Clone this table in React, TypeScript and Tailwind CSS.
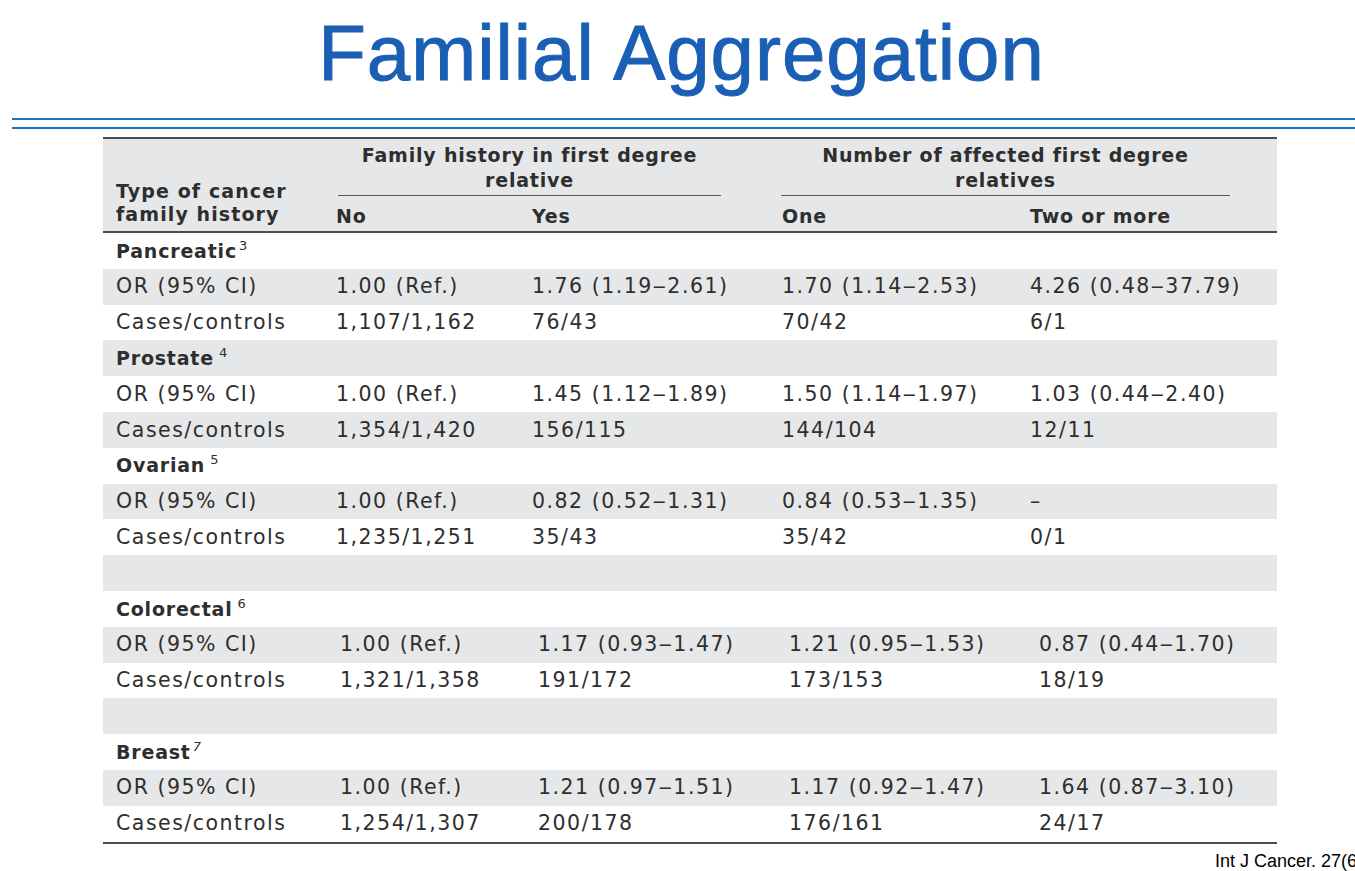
import React from 'react';

type Section = {
  name: string;
  sup: string;
  gap?: boolean;
  shift?: boolean;
  or: string[];
  cases: string[];
  blankAfter?: boolean;
};

const sections: Section[] = [
  {
    name: 'Pancreatic',
    sup: '3',
    or: ['1.00 (Ref.)', '1.76 (1.19‒2.61)', '1.70 (1.14‒2.53)', '4.26 (0.48‒37.79)'],
    cases: ['1,107/1,162', '76/43', '70/42', '6/1'],
  },
  {
    name: 'Prostate',
    sup: '4',
    gap: true,
    or: ['1.00 (Ref.)', '1.45 (1.12‒1.89)', '1.50 (1.14‒1.97)', '1.03 (0.44‒2.40)'],
    cases: ['1,354/1,420', '156/115', '144/104', '12/11'],
  },
  {
    name: 'Ovarian',
    sup: '5',
    gap: true,
    or: ['1.00 (Ref.)', '0.82 (0.52‒1.31)', '0.84 (0.53‒1.35)', '–'],
    cases: ['1,235/1,251', '35/43', '35/42', '0/1'],
    blankAfter: true,
  },
  {
    name: 'Colorectal',
    sup: '6',
    gap: true,
    shift: true,
    or: ['1.00 (Ref.)', '1.17 (0.93‒1.47)', '1.21 (0.95‒1.53)', '0.87 (0.44‒1.70)'],
    cases: ['1,321/1,358', '191/172', '173/153', '18/19'],
    blankAfter: true,
  },
  {
    name: 'Breast',
    sup: '7',
    shift: true,
    or: ['1.00 (Ref.)', '1.21 (0.97‒1.51)', '1.17 (0.92‒1.47)', '1.64 (0.87‒3.10)'],
    cases: ['1,254/1,307', '200/178', '176/161', '24/17'],
  },
];

type Row =
  | { kind: 'head'; s: Section }
  | { kind: 'data'; label: string; cells: string[]; shift?: boolean }
  | { kind: 'blank' };

const rows: Row[] = [];
sections.forEach((s) => {
  rows.push({ kind: 'head', s });
  rows.push({ kind: 'data', label: 'OR (95% CI)', cells: s.or, shift: s.shift });
  rows.push({ kind: 'data', label: 'Cases/controls', cells: s.cases, shift: s.shift });
  if (s.blankAfter) rows.push({ kind: 'blank' });
});

const baseCols = 'grid-cols-[233px_196px_250px_248px_1fr]';
const shiftCols = 'grid-cols-[237px_198px_251px_250px_1fr]';

export default function App() {
  return (
    <div className="w-[1355px] h-[871px] overflow-hidden bg-white">
      {/* Title */}
      <div className="pt-[14px] pl-2 text-center">
        <h1 className="text-[78px] leading-none text-[#1a5fb4] font-['Liberation_Sans',Arial,sans-serif] tracking-[1px] [-webkit-text-stroke:1px_#1a5fb4]">
          Familial Aggregation
        </h1>
      </div>

      {/* Blue rules */}
      <div className="ml-3 mt-[26px] flex flex-col gap-[7px]">
        <div className="h-[2px] bg-[#1c75bc]" />
        <div className="h-[2px] bg-[#1c75bc]" />
      </div>

      {/* Table */}
      <div className="ml-[103px] mt-[8px] w-[1174px] font-['DejaVu_Sans',sans-serif] text-[#2e2e2e]">
        <div
          className={`grid ${baseCols} grid-rows-[60px_1fr] h-[96px] bg-[#e6e7e8] border-t-2 border-b-2 border-[#4d4d4f] text-[19px] font-bold leading-[24px] tracking-[0.8px]`}
        >
          <div className="row-span-2 flex flex-col justify-end pl-[13px] pb-[5px] leading-[23px] tracking-[1.1px]">
            <span>Type of cancer</span>
            <span>family history</span>
          </div>
          <div className="col-span-2 pt-[4px]">
            <div className="ml-[2px] w-[383px]">
              <div className="text-center leading-[24.5px]">
                Family history in first degree
                <br />
                relative
              </div>
              <div className="h-px bg-[#58595b] mt-[3px]" />
            </div>
          </div>
          <div className="col-span-2 pt-[4px]">
            <div className="-ml-[1px] w-[449px]">
              <div className="text-center leading-[24.5px]">
                Number of affected first degree
                <br />
                relatives
              </div>
              <div className="h-px bg-[#58595b] mt-[3px]" />
            </div>
          </div>
          <div className="pt-[5px]">No</div>
          <div className="pt-[5px]">Yes</div>
          <div className="pt-[5px]">One</div>
          <div className="pt-[5px]">Two or more</div>
        </div>

        <div>
          {rows.map((r, i) => {
            const bg = i % 2 === 1 ? 'bg-[#e6e7e8]' : 'bg-white';
            if (r.kind === 'blank') {
              return <div key={i} className={`h-[35.8px] ${bg}`} />;
            }
            if (r.kind === 'head') {
              return (
                <div
                  key={i}
                  className={`h-[35.8px] ${bg} flex items-center pl-[13px] text-[19px] font-bold tracking-[0.8px]`}
                >
                  {r.s.name}
                  <sup
                    className={`text-[13px] font-normal tracking-normal -top-[0.4em] ${
                      r.s.gap ? 'ml-[5px]' : 'ml-[2px]'
                    } ${r.s.name === 'Breast' ? 'italic' : ''}`}
                  >
                    {r.s.sup}
                  </sup>
                </div>
              );
            }
            return (
              <div
                key={i}
                className={`h-[35.8px] ${bg} grid ${
                  r.shift ? shiftCols : baseCols
                } items-center text-[20.5px] tracking-[1.5px] whitespace-nowrap`}
              >
                <div className="pl-[13px]">{r.label}</div>
                {r.cells.map((c, j) => (
                  <div key={j}>{c}</div>
                ))}
              </div>
            );
          })}
        </div>
        <div className="h-[2px] bg-[#4d4d4f]" />
      </div>

      {/* Citation */}
      <div className="mt-[4px] pl-[1215px] whitespace-nowrap text-[18px] text-black font-['Liberation_Sans',Arial,sans-serif]">
        Int J Cancer. 27(6)
      </div>
    </div>
  );
}
